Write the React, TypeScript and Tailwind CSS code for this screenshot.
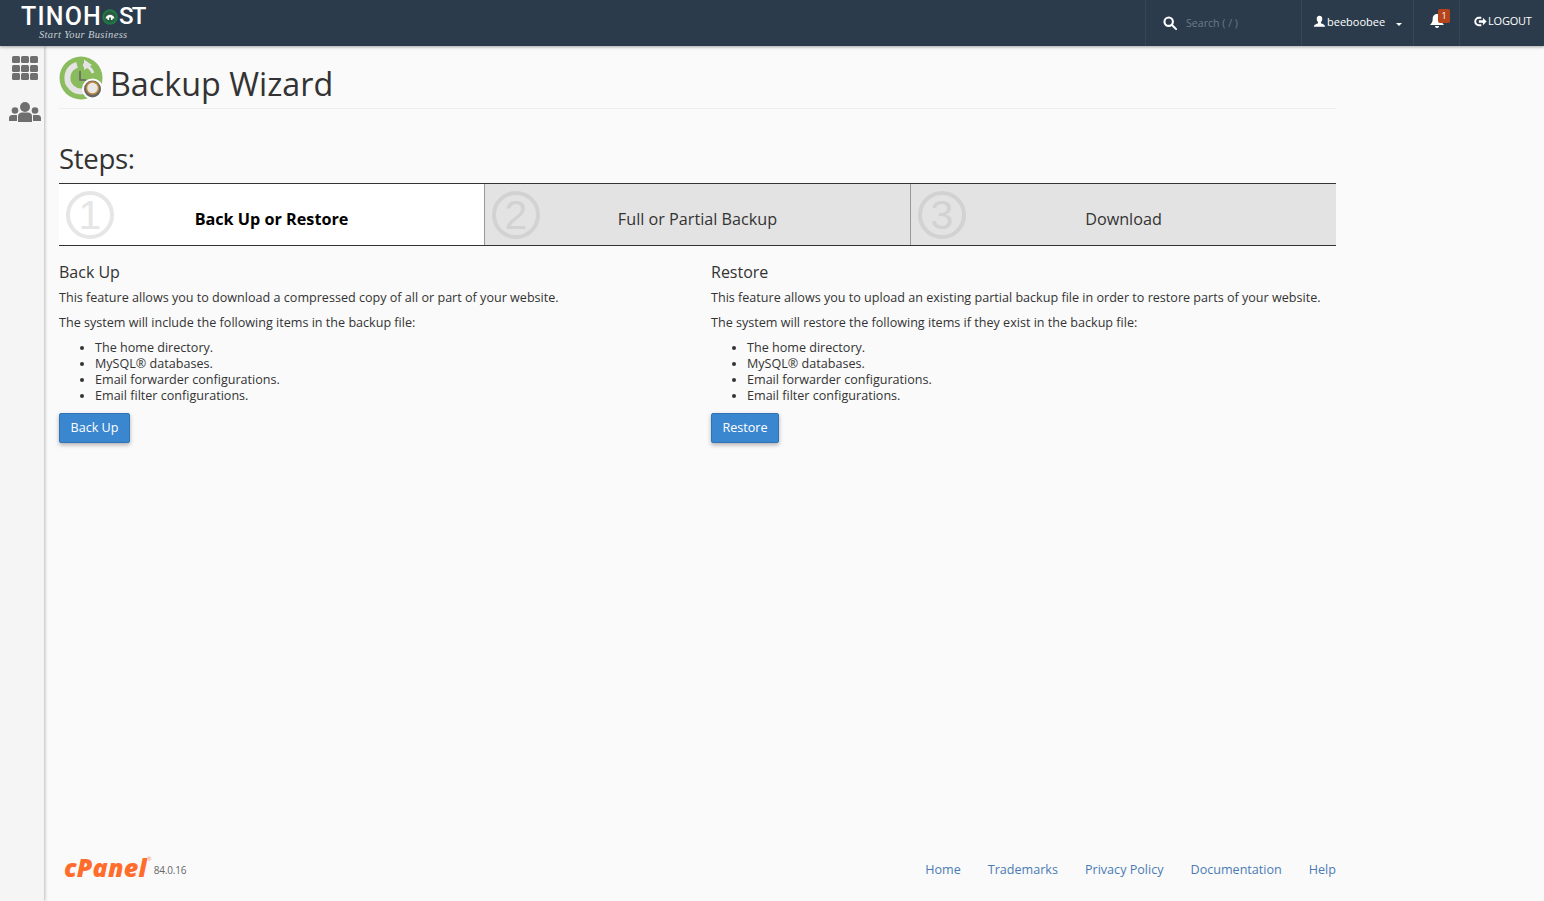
import React from "react";

const items = ["The home directory.", "MySQL® databases.", "Email forwarder configurations.", "Email filter configurations."];

function Column({ title, p1, p2, btn, className }: { title: string; p1: string; p2: string; btn: string; className: string }) {
  return (
    <div className={className}>
      <h4 className="text-[16px] leading-[18px] text-[#333] mt-[17px] mb-[8px]">{title}</h4>
      <p className="text-[12.58px] leading-[18px] text-[#333] mb-[7px] whitespace-nowrap">{p1}</p>
      <p className="text-[12.58px] leading-[18px] text-[#333] mb-[7px] whitespace-nowrap">{p2}</p>
      <ul className="list-disc pl-[36px] text-[12.58px] leading-[16px] text-[#333] mt-[8px] mb-[9px]">
        {items.map((i) => (
          <li key={i}>{i}</li>
        ))}
      </ul>
      <button className={"h-[30px] bg-[#3a87cf] border border-[#2f74b5] rounded-[2px] text-white text-[12.6px] leading-[18px] shadow-[0_2px_4px_rgba(0,0,0,0.3)] " + (btn === "Back Up" ? "w-[71px]" : "w-[68px]")}>
        {btn}
      </button>
    </div>
  );
}

function Step({ n, label, active }: { n: string; label: string; active?: boolean }) {
  return (
    <div className={"flex-1 relative h-[61px] flex items-center justify-center " + (active ? "bg-white" : "bg-[#e3e3e3] border-l border-[#999]")}>
      <span className={"absolute left-[7px] top-[7px] w-[48px] h-[48px] rounded-full border-[4px] flex items-center justify-center " + (active ? "border-[#e6e6e6]" : "border-[#d2d2d2]")}>
        <span className={"text-[41px] leading-none font-['Liberation_Sans',sans-serif] " + (active ? "text-[#e6e6e6]" : "text-[#d2d2d2]")}>{n}</span>
      </span>
      <span className={"text-[16.2px] pt-[10px] text-center whitespace-nowrap " + (active ? "font-bold text-black" : "text-[#333]")}>
        {label}
      </span>
    </div>
  );
}

export default function App() {
  return (
    <div className="h-[901px] flex flex-col overflow-hidden bg-[#fafafa] font-['Open_Sans','Noto_Sans',sans-serif]">
      <header className="relative z-20 h-[46px] shrink-0 bg-[#2b3b4c] shadow-[0_1px_3px_rgba(0,0,0,0.35)] flex items-stretch">
        <div className="pl-[21px] pt-[3px] w-[300px]">
          <div className="flex items-center h-[27px] text-white text-[25px] leading-[27px] font-['Roboto','Open_Sans',sans-serif]">
            <span className="tracking-[1.2px] font-medium">TINOH</span>
            <svg viewBox="0 0 16 16" className="w-[16px] h-[16px] ml-[0px] mr-[1px]">
              <circle cx="8" cy="8" r="7.800" fill="#1f7a45" />
              <circle cx="8" cy="8" r="5.800" fill="#2b5b45" />
              <path d="M3.500 9.500 C4.500 4.500 11.500 4.500 12.500 9.500 L10.500 9.500 L10.500 11 L5.500 11 L5.500 9.500 Z" fill="#fff" />
              <rect x="7" y="8.500" width="2" height="2.500" fill="#1f7a45" />
            </svg>
            <span className="font-medium tracking-[-1.8px] text-[24px]">ST</span>
          </div>
          <div className="text-[10.5px] leading-[12px] italic text-[#c9ced3] pl-[18px] -mt-[1px] font-['Liberation_Serif',serif] tracking-[0.35px]">Start Your Business</div>
        </div>
        <div className="flex-1" />
        <div className="w-[156px] border-l border-[#33465a] flex items-center pl-[17px]">
          <svg viewBox="0 0 16 16" className="w-[14px] h-[14px] mr-[9px] -mt-[1px]" fill="none" stroke="#fff" strokeWidth="2.400">
            <circle cx="6.500" cy="6.500" r="4.800" />
            <path d="M10 10 L15 15" strokeLinecap="round" />
          </svg>
          <span className="text-[10.6px] text-[#6d7a88] pt-[1px]">Search ( / )</span>
        </div>
        <div className="w-[112px] border-l border-[#33465a] flex items-center pl-[11px] pb-[1px] text-white text-[11px]">
          <svg viewBox="0 0 16 16" className="w-[13px] h-[13px] mr-[1px] -mt-[2px]" fill="#fff">
            <path d="M8 1c2.400 0 3.600 1.800 3.400 4-.1 1.600-.8 3-1.600 3.800v1.200c1.600.8 5 1.500 5.200 4.500H1c.2-3 3.600-3.700 5.200-4.500V8.800C5.400 8 4.700 6.600 4.600 5 4.400 2.800 5.600 1 8 1z" />
          </svg>
          <span>beeboobee</span>
          <span className="ml-[11px] mt-[4px] w-0 h-0 border-l-[3px] border-r-[3px] border-t-[3px] border-l-transparent border-r-transparent border-t-white" />
        </div>
        <div className="w-[46px] border-l border-[#33465a] relative">
          <svg viewBox="0 0 16 16" className="absolute left-[15px] top-[13px] w-[16px] h-[16px]" fill="#fff">
            <path d="M8 1c3 0 4.300 2.400 4.300 5 0 3 1.200 4.500 2.700 6H1c1.500-1.500 2.700-3 2.700-6C3.700 3.400 5 1 8 1z" />
            <path d="M6 13h4a2 2 0 0 1-4 0z" />
          </svg>
          <span className="absolute left-[24px] top-[9px] w-[12px] h-[14px] rounded-[2px] bg-[#b5441a] text-white text-[9px] leading-[14px] text-center">1</span>
        </div>
        <div className="w-[85px] border-l border-[#33465a] flex items-center pl-[14px] pb-[4px] text-white text-[11px] tracking-[-0.2px]">
          <svg viewBox="0 0 16 16" className="w-[13px] h-[13px] mr-[1px]" fill="none">
            <path d="M9 3.500H6a4.500 4.500 0 0 0 0 9h3" stroke="#fff" strokeWidth="2.400" />
            <path d="M6 6.500h5V3.500L15.500 8 11 12.500v-3H6z" fill="#fff" />
          </svg>
          <span>LOGOUT</span>
        </div>
      </header>

      <div className="flex-1 flex min-h-0">
        <aside className="relative z-10 w-[44px] shrink-0 bg-[#f5f5f5] shadow-[1px_0_3px_rgba(0,0,0,0.25)] flex flex-col items-center pt-[10px] pl-[6px]">
          <div className="grid grid-cols-3 gap-[1.5px] w-[26px]">
            {Array.from({ length: 9 }).map((_, i) => (
              <span key={i} className="h-[7px] rounded-[1.5px] bg-[#6f6f6f]" />
            ))}
          </div>
          <svg viewBox="0 0 32 20" className="w-[32px] h-[20px] mt-[22px]" fill="#6f6f6f">
            <circle cx="16" cy="5" r="5" />
            <path d="M9 20v-6c0-2 2-3.500 4-3.500h6c2 0 4 1.500 4 3.500v6z" />
            <circle cx="6" cy="8.500" r="3.300" />
            <path d="M0 19v-3c0-2 1.500-3 3-3h4c.5 0 .8 0 1 .2V19z" />
            <circle cx="26" cy="8.500" r="3.300" />
            <path d="M32 19v-3c0-2-1.500-3-3-3h-4c-.5 0-.8 0-1 .2V19z" />
          </svg>
        </aside>

        <main className="flex-1 flex flex-col pl-[15px] min-w-0">
          <div className="w-[1277px] flex-1 flex flex-col">
            <div className="flex items-center h-[63px] border-b border-[#eeeeee] pt-[9px] pb-[7px]">
              <svg viewBox="0 0 44 44" className="w-[44px] h-[44px] shrink-0">
                <circle cx="22" cy="22" r="21.500" fill="#8abb5c" />
                <path d="M18 8.900 A13.500 13.500 0 1 0 35 25" fill="none" stroke="#e4e4e4" strokeWidth="6" />
                <path d="M24 8.800 A13.500 13.500 0 0 1 34 17" fill="none" stroke="#e4e4e4" strokeWidth="3" />
                <path d="M25 3.500 L25 14 L33 9z" fill="#e4e4e4" />
                <path d="M21 15v9h6" fill="none" stroke="#666" strokeWidth="1.600" />
                <circle cx="33.500" cy="33" r="10.500" fill="#fff" />
                <circle cx="33.500" cy="33" r="8.500" fill="#666" />
                <circle cx="33.500" cy="32" r="6" fill="#e8e8e8" stroke="#c58b3c" strokeWidth="1.500" />
              </svg>
              <h1 className="text-[32.3px] leading-[40px] text-[#333] ml-[7px] pt-[10px]">Backup Wizard</h1>
            </div>

            <h2 className="text-[27.6px] leading-[32px] text-[#333] mt-[33px] mb-[9px] tracking-[-0.35px]">Steps:</h2>

            <div className="flex border-y border-[#333] h-[63px]">
              <Step n="1" label="Back Up or Restore" active />
              <Step n="2" label="Full or Partial Backup" />
              <Step n="3" label="Download" />
            </div>

            <div className="flex">
              <Column
                className="w-[652px] shrink-0"
                title="Back Up"
                p1="This feature allows you to download a compressed copy of all or part of your website."
                p2="The system will include the following items in the backup file:"
                btn="Back Up"
              />
              <Column
                className="flex-1"
                title="Restore"
                p1="This feature allows you to upload an existing partial backup file in order to restore parts of your website."
                p2="The system will restore the following items if they exist in the backup file:"
                btn="Restore"
              />
            </div>

            <footer className="mt-auto h-[50px] flex items-start justify-between pt-[6px]">
              <div className="flex items-start pl-[5px] h-[28px]">
                <span className="text-[25px] leading-[26px] -mt-[3px] font-extrabold italic text-[#ff6c2c] tracking-[0.2px] font-['Open_Sans',sans-serif]">cPanel</span>
                <span className="text-[6px] leading-[8px] -mt-[2px] text-[#e8a080]">®</span>
                <span className="text-[10px] text-[#666] ml-[2px] mt-[6px] leading-[14px] tracking-[-0.2px]">84.0.16</span>
              </div>
              <nav className="flex gap-[27px] text-[12.58px] leading-[18px] text-[#4a7ab5] pt-[4px]">
                <span>Home</span>
                <span>Trademarks</span>
                <span>Privacy Policy</span>
                <span>Documentation</span>
                <span>Help</span>
              </nav>
            </footer>
          </div>
        </main>
      </div>
    </div>
  );
}
